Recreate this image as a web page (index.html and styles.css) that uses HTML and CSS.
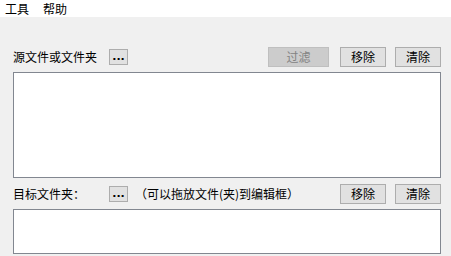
FILE: index.html
```html
<!DOCTYPE html>
<html>
<head>
<meta charset="utf-8">
<link rel="stylesheet" href="styles.css">
</head>
<body>
<div class="window">
  <div class="menubar">
    <span class="menu-item">工具</span>
    <span class="menu-item">帮助</span>
  </div>
  <div class="content">
    <div class="row row-src">
      <span class="label">源文件或文件夹</span>
      <button class="btn-dots">...</button>
      <span class="spacer"></span>
      <button class="btn btn-filter" disabled>过滤</button>
      <button class="btn btn-remove">移除</button>
      <button class="btn btn-clear">清除</button>
    </div>
    <div class="listbox listbox-src"></div>
    <div class="row row-dst">
      <span class="label">目标文件夹：</span>
      <button class="btn-dots">...</button>
      <span class="hint">（可以拖放文件(夹)到编辑框）</span>
      <span class="spacer"></span>
      <button class="btn btn-remove">移除</button>
      <button class="btn btn-clear">清除</button>
    </div>
    <div class="listbox listbox-dst"></div>
  </div>
</div>
</body>
</html>
```

FILE: styles.css
```css
* {
  box-sizing: border-box;
}
html, body {
  margin: 0;
  padding: 0;
}
body {
  width: 451px;
  height: 256px;
  overflow: hidden;
  background: #f0f0f0;
  font-family: "Noto Sans CJK SC", "Noto Sans", sans-serif;
  font-size: 12px;
  color: #000;
}
.window {
  display: flex;
  flex-direction: column;
  height: 256px;
}
.menubar {
  height: 17px;
  background: #ffffff;
  display: flex;
  align-items: center;
  padding-left: 5px;
  gap: 14px;
  line-height: 14px;
}
.menu-item {
  display: block;
}
.content {
  display: flex;
  flex-direction: column;
  padding: 30px 10px 0 13px;
}
.row {
  display: flex;
  align-items: center;
  height: 20px;
}
.label {
  width: 96px;
  line-height: 14px;
  white-space: nowrap;
}
.btn-dots {
  width: 19px;
  height: 16px;
  padding: 0 0 1px 0;
  margin: 0;
  border: 1px solid #adadad;
  background: #e1e1e1;
  font-family: "DejaVu Sans", sans-serif;
  font-size: 11px;
  font-weight: bold;
  letter-spacing: 0;
  line-height: 12px;
  color: #000;
}
.hint {
  margin-left: 7px;
  white-space: nowrap;
  line-height: 14px;
}
.spacer {
  flex: 1;
}
.btn {
  height: 20px;
  width: 46px;
  padding: 0;
  margin: 0;
  border: 1px solid #adadad;
  background: #e1e1e1;
  font-family: "Noto Sans CJK SC", sans-serif;
  font-size: 12px;
  line-height: 16px;
  color: #000;
}
.btn-filter {
  width: 61px;
  margin-right: 11px;
  background: #cccccc;
  border-color: #bfbfbf;
  color: #838383;
}
.btn-remove {
  margin-right: 9px;
}
.listbox {
  background: #ffffff;
  border: 1px solid #828790;
}
.listbox-src {
  margin-top: 5px;
  height: 106px;
}
.row-dst {
  margin-top: 6px;
}
.listbox-dst {
  margin-top: 5px;
  height: 45px;
}
```
